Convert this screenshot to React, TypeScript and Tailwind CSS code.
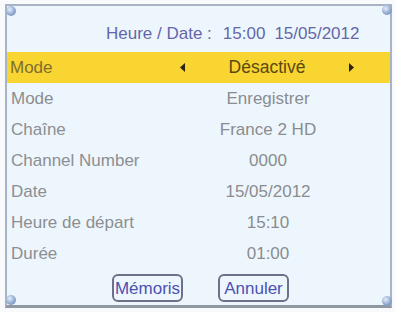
const rows = [
  { label: 'Mode', value: 'Enregistrer' },
  { label: 'Chaîne', value: 'France 2 HD' },
  { label: 'Channel Number', value: '0000' },
  { label: 'Date', value: '15/05/2012' },
  { label: 'Heure de départ', value: '15:10' },
  { label: 'Durée', value: '01:00' },
]

function Ball({ className }: { className: string }) {
  return (
    <span
      className={`absolute w-[10px] h-[10px] rounded-full bg-[radial-gradient(circle_at_38%_35%,#e6eef9,#8fa9d0_55%,#6884b6)] ${className}`}
    />
  )
}

function Arrow({ dir }: { dir: 'left' | 'right' }) {
  return (
    <svg width="5" height="9" viewBox="0 0 5 9" className="shrink-0">
      {dir === 'left' ? <polygon points="5,0 0,4.5 5,9" fill="#2a2410" /> : <polygon points="0,0 5,4.5 0,9" fill="#2a2410" />}
    </svg>
  )
}

export default function App() {
  return (
    <div className="w-[395px] h-[312px] bg-[#f8fafc] pt-[4px] pl-[5px] pr-[3px] pb-[4px] font-['Liberation_Sans',Arial,sans-serif]">
      <div className="relative h-full flex flex-col bg-[#eef6fd] border-2 border-[#a6b4c6] border-b-[3px] border-b-[#8f98a3]">
        <Ball className="-left-[1px] top-0" />
        <Ball className="-right-[2px] -top-[1px]" />
        <Ball className="-left-[1px] bottom-0" />
        <Ball className="-right-[2px] -bottom-[1px]" />

        {/* titre */}
        <div className="h-[46px] shrink-0 flex items-center pt-[8px] pl-[99px] text-[17px] text-[#6367a9] leading-none">
          <span>Heure / Date :</span>
          <span className="ml-[11px]">15:00</span>
          <span className="ml-[9px]">15/05/2012</span>
        </div>

        {/* ligne sélectionnée */}
        <div className="h-[31px] shrink-0 flex items-center bg-[#f9d532] leading-none">
          <span className="w-[171px] pl-[3px] text-[17px] text-[#7e6f30]">Mode</span>
          <div className="w-[180px] flex items-center pl-[2px] pr-[4px]">
            <Arrow dir="left" />
            <span className="flex-1 text-center text-[17.5px] text-[#5a4910]">Désactivé</span>
            <Arrow dir="right" />
          </div>
        </div>

        {rows.map((r) => (
          <div key={r.label} className="h-[31px] shrink-0 flex items-center leading-none">
            <span className="w-[171px] pl-[4px] text-[17px] text-[#8c8e92]">{r.label}</span>
            <span className="w-[180px] text-center text-[17px] text-[#8a8c8f]">{r.value}</span>
          </div>
        ))}

        {/* boutons */}
        <div className="flex-1 flex items-start justify-center gap-[35px] pt-[5px] pl-[4px]">
          <button className="w-[71px] h-[28px] rounded-[6px] border-2 border-[#6c7189] text-[17px] text-[#4b51b3] leading-none">
            Mémoris
          </button>
          <button className="w-[71px] h-[28px] rounded-[6px] border-2 border-[#6c7189] text-[17px] text-[#4b51b3] leading-none">
            Annuler
          </button>
        </div>
      </div>
    </div>
  )
}
